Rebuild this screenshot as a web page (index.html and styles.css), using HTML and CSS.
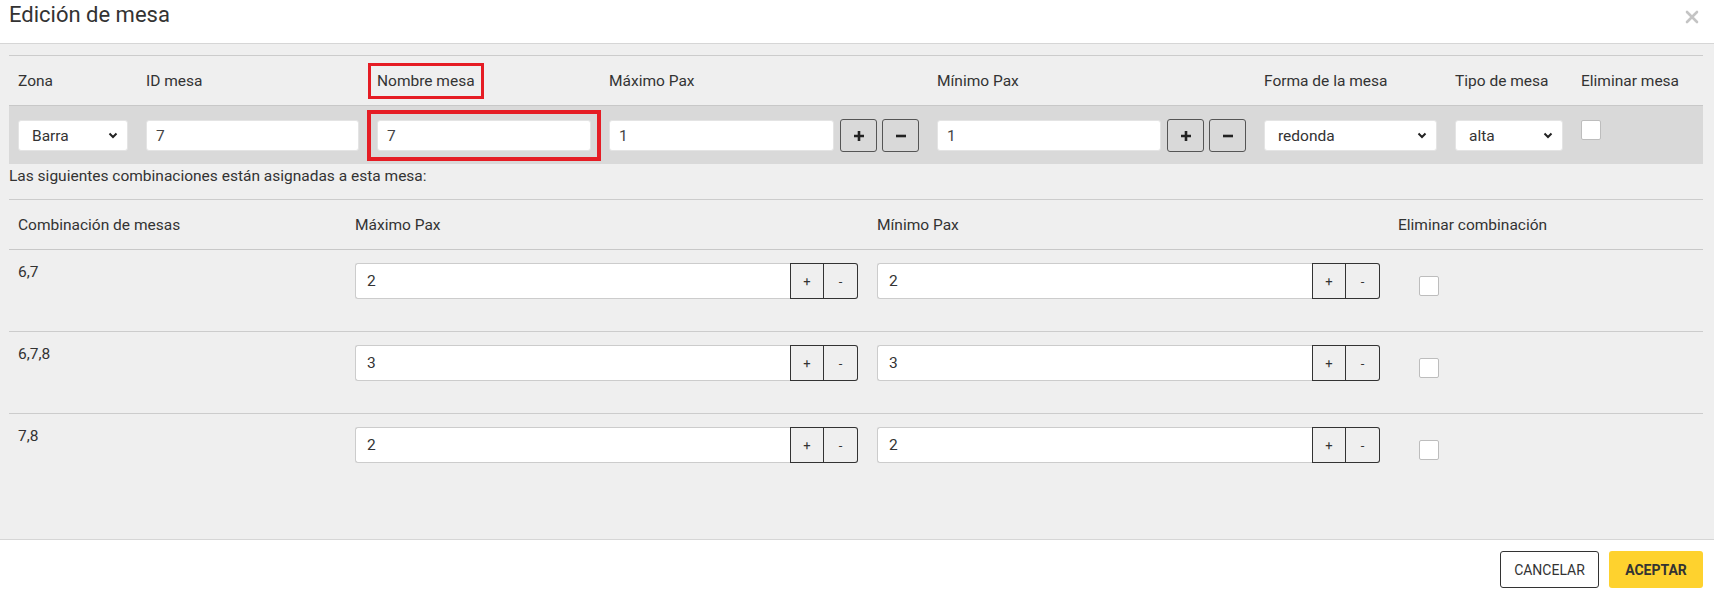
FILE: index.html
```html
<!DOCTYPE html>
<html lang="es">
<head>
    <meta charset="UTF-8">
    <meta name="viewport" content="width=device-width, initial-scale=1.0">
    <title>Edición de mesa</title>
    <link rel="stylesheet" href="styles.css">
</head>
<body>
    <div class="modal">
        <header class="modal-head">
            <h2>Edición de mesa</h2>
            <button class="close" title="Cerrar">
                <svg width="14" height="14" viewBox="0 0 14 14"><path d="M2 2 L12 12 M12 2 L2 12" stroke="#c4c4c4" stroke-width="2.6" stroke-linecap="round"/></svg>
            </button>
        </header>

        <div class="modal-body">
            <!-- datos de la mesa -->
            <div class="mesa-table">
                <div class="row head">
                    <div class="cell">Zona</div>
                    <div class="cell">ID mesa</div>
                    <div class="cell"><span class="mark">Nombre mesa</span></div>
                    <div class="cell">Máximo Pax</div>
                    <div class="cell">Mínimo Pax</div>
                    <div class="cell">Forma de la mesa</div>
                    <div class="cell">Tipo de mesa</div>
                    <div class="cell">Eliminar mesa</div>
                </div>
                <div class="row edit">
                    <div class="cell">
                        <div class="select">
                            <select><option>Barra</option></select>
                            <svg class="chev" width="10" height="7" viewBox="0 0 10 7"><path d="M1.5 1.5 L5 5 L8.5 1.5" fill="none" stroke="#222" stroke-width="2"/></svg>
                        </div>
                    </div>
                    <div class="cell"><input class="field" type="text" value="7"></div>
                    <div class="cell"><div class="marked"><input class="field" type="text" value="7"></div></div>
                    <div class="cell stepper">
                        <input class="field" type="text" value="1">
                        <button class="step"><svg width="12" height="12" viewBox="0 0 12 12"><path d="M6 1 V11 M1 6 H11" stroke="#222" stroke-width="2.6"/></svg></button>
                        <button class="step"><svg width="12" height="12" viewBox="0 0 12 12"><path d="M1 6 H11" stroke="#222" stroke-width="2.6"/></svg></button>
                    </div>
                    <div class="cell stepper">
                        <input class="field" type="text" value="1">
                        <button class="step"><svg width="12" height="12" viewBox="0 0 12 12"><path d="M6 1 V11 M1 6 H11" stroke="#222" stroke-width="2.6"/></svg></button>
                        <button class="step"><svg width="12" height="12" viewBox="0 0 12 12"><path d="M1 6 H11" stroke="#222" stroke-width="2.6"/></svg></button>
                    </div>
                    <div class="cell">
                        <div class="select">
                            <select><option>redonda</option></select>
                            <svg class="chev" width="10" height="7" viewBox="0 0 10 7"><path d="M1.5 1.5 L5 5 L8.5 1.5" fill="none" stroke="#222" stroke-width="2"/></svg>
                        </div>
                    </div>
                    <div class="cell">
                        <div class="select">
                            <select><option>alta</option></select>
                            <svg class="chev" width="10" height="7" viewBox="0 0 10 7"><path d="M1.5 1.5 L5 5 L8.5 1.5" fill="none" stroke="#222" stroke-width="2"/></svg>
                        </div>
                    </div>
                    <div class="cell"><input class="check" type="checkbox"></div>
                </div>
            </div>

            <p class="note">Las siguientes combinaciones están asignadas a esta mesa:</p>

            <!-- combinaciones -->
            <div class="combo-table">
                <div class="row head">
                    <div class="cell">Combinación de mesas</div>
                    <div class="cell">Máximo Pax</div>
                    <div class="cell">Mínimo Pax</div>
                    <div class="cell">Eliminar combinación</div>
                </div>
                <div class="row">
                    <div class="cell name">6,7</div>
                    <div class="cell"><div class="group"><input type="text" value="2"><button>+</button><button>-</button></div></div>
                    <div class="cell"><div class="group"><input type="text" value="2"><button>+</button><button>-</button></div></div>
                    <div class="cell"><input class="check" type="checkbox"></div>
                </div>
                <div class="row">
                    <div class="cell name">6,7,8</div>
                    <div class="cell"><div class="group"><input type="text" value="3"><button>+</button><button>-</button></div></div>
                    <div class="cell"><div class="group"><input type="text" value="3"><button>+</button><button>-</button></div></div>
                    <div class="cell"><input class="check" type="checkbox"></div>
                </div>
                <div class="row last">
                    <div class="cell name">7,8</div>
                    <div class="cell"><div class="group"><input type="text" value="2"><button>+</button><button>-</button></div></div>
                    <div class="cell"><div class="group"><input type="text" value="2"><button>+</button><button>-</button></div></div>
                    <div class="cell"><input class="check" type="checkbox"></div>
                </div>
            </div>
        </div>

        <footer class="modal-foot">
            <button class="btn cancel">CANCELAR</button>
            <button class="btn accept">ACEPTAR</button>
        </footer>
    </div>
</body>
</html>
```

FILE: styles.css
```css
* {
    box-sizing: border-box;
}
body {
    margin: 0;
    font-family: Roboto, "Liberation Sans", sans-serif;
    color: #333;
    background: #fff;
}
.modal {
    width: 1714px;
    height: 598px;
    display: flex;
    flex-direction: column;
}
.modal-head {
    height: 44px;
    border-bottom: 1px solid #d6d6d6;
    display: flex;
    justify-content: space-between;
    align-items: flex-start;
    padding: 2px 15px 0 9px;
}
.modal-head h2 {
    margin: 0;
    font-size: 22px;
    font-weight: 400;
    line-height: 26px;
    color: #333;
}
.close {
    background: none;
    border: none;
    padding: 0;
    margin-top: 8px;
    cursor: pointer;
}
.modal-body {
    height: 495px;
    background: #efefef;
    padding: 11px 11px 0 9px;
    font-size: 15.5px;
}

/* tablas */
.row {
    display: grid;
}
.cell {
    padding: 0 9px;
}
.mesa-table {
    border-top: 1px solid #ccc;
}
.mesa-table .row {
    grid-template-columns: 128px 231px 232px 328px 327px 191px 126px 1fr;
}
.row.head {
    height: 50px;
    align-items: center;
    border-bottom: 1px solid #c8c8c8;
}
.row.edit {
    background: #d9d9d9;
    padding: 14px 0 13px;
    align-items: start;
}
.mark {
    outline: 3px solid #e51c24;
    outline-offset: 6px;
}
.marked {
    outline: 4px solid #e51c24;
    outline-offset: 6px;
}
.field {
    display: block;
    width: 100%;
    height: 31px;
    border: 1px solid #e4e4e4;
    border-radius: 3px;
    background: #fff;
    font: inherit;
    color: #444;
    padding: 0 9px;
    outline: none;
}
.select {
    position: relative;
}
.select select {
    appearance: none;
    width: 100%;
    height: 31px;
    border: 1px solid #e4e4e4;
    border-radius: 3px;
    background: #fff;
    font: inherit;
    color: #333;
    padding: 0 13px;
}
.chev {
    position: absolute;
    right: 10px;
    top: 12px;
    pointer-events: none;
}
.stepper {
    display: flex;
    align-items: center;
    height: 31px;
}
.stepper .field {
    flex: 1;
    margin-right: 6px;
}
.step {
    flex: none;
    width: 37px;
    height: 33px;
    margin-left: 5px;
    border: 1px solid #555;
    border-radius: 3px;
    background: #d9d9d9;
    display: flex;
    align-items: center;
    justify-content: center;
    padding: 0;
}
.stepper .field + .step {
    margin-left: 0;
}
.check {
    appearance: none;
    width: 20px;
    height: 20px;
    margin: 0;
    border: 1px solid #bdbdbd;
    border-radius: 2px;
    background: #fff;
}
.note {
    margin: 0;
    padding: 2px 0 13px;
    line-height: 20px;
}
.combo-table {
    border-top: 1px solid #ccc;
}
.combo-table .row {
    grid-template-columns: 337px 522px 521px 1fr;
}
.combo-table .row:not(.head) {
    height: 82px;
    padding-top: 13px;
    border-bottom: 1px solid #ccc;
    align-items: start;
}
.combo-table .row.last {
    border-bottom: none;
}
.name {
    line-height: 18px;
    padding-top: 0;
}
.group {
    display: flex;
    width: 503px;
    height: 36px;
}
.group input {
    flex: 1;
    min-width: 0;
    border: 1px solid #ccc;
    border-right: none;
    border-radius: 3px 0 0 3px;
    background: #fff;
    font: inherit;
    color: #333;
    padding: 0 11px;
    outline: none;
}
.group button {
    width: 34px;
    border: 1px solid #333;
    background: #efefef;
    font-family: Roboto, "Liberation Sans", sans-serif;
    font-size: 13px;
    color: #333;
    padding: 0;
}
.group button + button {
    border-left: none;
    border-radius: 0 3px 3px 0;
}
.combo-table .check {
    margin: 13px 0 0 21px;
}
.modal-foot {
    flex: 1;
    border-top: 1px solid #d6d6d6;
    display: flex;
    justify-content: flex-end;
    align-items: flex-start;
    gap: 10px;
    padding: 11px 11px 0 0;
}
.btn {
    height: 37px;
    border-radius: 3px;
    font-family: Roboto, "Liberation Sans", sans-serif;
    font-size: 14px;
    color: #333;
    cursor: pointer;
}
.cancel {
    width: 99px;
    background: #fff;
    border: 1px solid #333;
}
.accept {
    width: 94px;
    background: #fed22e;
    border: none;
    font-weight: 700;
}
```
